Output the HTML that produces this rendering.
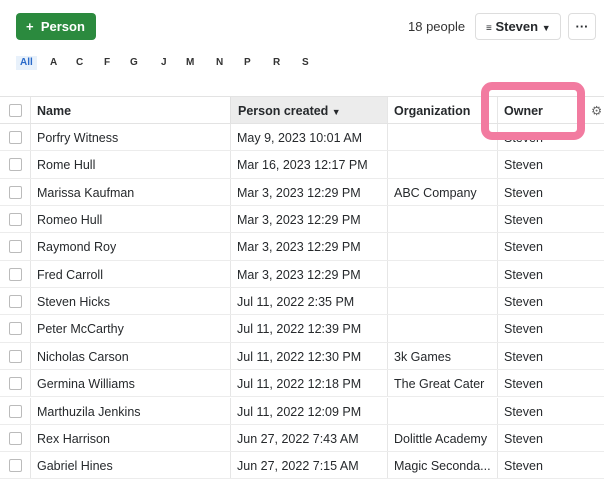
<!DOCTYPE html>
<html><head><meta charset="utf-8"><style>
*{box-sizing:border-box;margin:0;padding:0}
body{width:604px;height:480px;overflow:hidden;background:#fff;font-family:"Liberation Sans",sans-serif;color:#26292c;position:relative}
.btn{position:absolute;left:16px;top:13px;width:80px;height:27px;background:#2b8a3e;border-radius:4px;color:#fff;font-weight:bold;font-size:13px;line-height:27px;padding-left:10px}
.letters{position:absolute;top:56px;left:16px;font-size:10px;font-weight:bold;color:#333}
.letters span{position:absolute;top:0;line-height:14px}
.all{background:#e8f1fb;color:#2a6ac9;padding:0 4px;left:0}
.top{position:absolute;top:13px;height:27px;border:1px solid #ddd;border-radius:4px;font-size:13px;font-weight:bold;line-height:25px}
.hdr{position:absolute;top:96px;left:0;width:604px;height:28px;border-top:1px solid #e3e3e3;border-bottom:1px solid #e3e3e3;font-size:12.5px;font-weight:bold;line-height:29px}
.row{position:absolute;left:0;width:604px;height:27.3px;border-bottom:1px solid #ececec;font-size:12.5px;line-height:29px}
.c{position:absolute;top:0;height:100%;padding-left:7px;white-space:nowrap;overflow:hidden}
.cb{position:absolute;left:9px;top:7px;width:13px;height:13px;border:1px solid #bbb;border-radius:2px;background:#fff}
.v{position:absolute;top:0;height:100%;border-left:1px solid #e6e6e6}
</style></head><body>
<div class="btn">+&nbsp; Person</div>
<div class="letters">
<span class="all">All</span><span style="left:34px">A</span><span style="left:60px">C</span><span style="left:88px">F</span><span style="left:114px">G</span><span style="left:145px">J</span><span style="left:170px">M</span><span style="left:200px">N</span><span style="left:228px">P</span><span style="left:257px">R</span><span style="left:286px">S</span>
</div>
<div style="position:absolute;left:408px;top:19px;font-size:13px;color:#333">18 people</div>
<div class="top" style="left:475px;width:86px;padding-left:10px"><span style="font-size:10px">≡</span> Steven <span style="font-size:9px">▼</span></div>
<div class="top" style="left:568px;width:28px;text-align:center">···</div>

<div class="hdr">
<div class="cb" style="top:7px"></div>
<div class="v" style="left:30px"></div><div class="c" style="left:30px">Name</div>
<div class="c" style="left:230px;width:157px;background:#ececec;border-left:1px solid #e0e0e0">Person created <span style="font-size:9px">▼</span></div>
<div class="v" style="left:387px"></div><div class="c" style="left:387px">Organization</div>
<div class="v" style="left:497px"></div><div class="c" style="left:497px">Owner</div>
<div class="c" style="left:584px;color:#666;font-weight:normal">⚙</div>
</div>
<div id="rows"></div>
<div style="position:absolute;left:481px;top:82px;width:104px;height:58px;border:8px solid #f27ba0;border-radius:11px"></div>
<script>
var d=[["Porfry Witness","May 9, 2023 10:01 AM",""],["Rome Hull","Mar 16, 2023 12:17 PM",""],["Marissa Kaufman","Mar 3, 2023 12:29 PM","ABC Company"],["Romeo Hull","Mar 3, 2023 12:29 PM",""],["Raymond Roy","Mar 3, 2023 12:29 PM",""],["Fred Carroll","Mar 3, 2023 12:29 PM",""],["Steven Hicks","Jul 11, 2022 2:35 PM",""],["Peter McCarthy","Jul 11, 2022 12:39 PM",""],["Nicholas Carson","Jul 11, 2022 12:30 PM","3k Games"],["Germina Williams","Jul 11, 2022 12:18 PM","The Great Cater"],["Marthuzila Jenkins","Jul 11, 2022 12:09 PM",""],["Rex Harrison","Jun 27, 2022 7:43 AM","Dolittle Academy"],["Gabriel Hines","Jun 27, 2022 7:15 AM","Magic Seconda..."]];
var h="";d.forEach(function(r,i){h+='<div class="row" style="top:'+(124+i*27.35)+'px"><div class="cb"></div><div class="v" style="left:30px"></div><div class="c" style="left:30px">'+r[0]+'</div><div class="v" style="left:230px"></div><div class="c" style="left:230px">'+r[1]+'</div><div class="v" style="left:387px"></div><div class="c" style="left:387px;width:110px">'+r[2]+'</div><div class="v" style="left:497px"></div><div class="c" style="left:497px">Steven</div></div>'});
document.getElementById("rows").innerHTML=h;
</script>
</body></html>
